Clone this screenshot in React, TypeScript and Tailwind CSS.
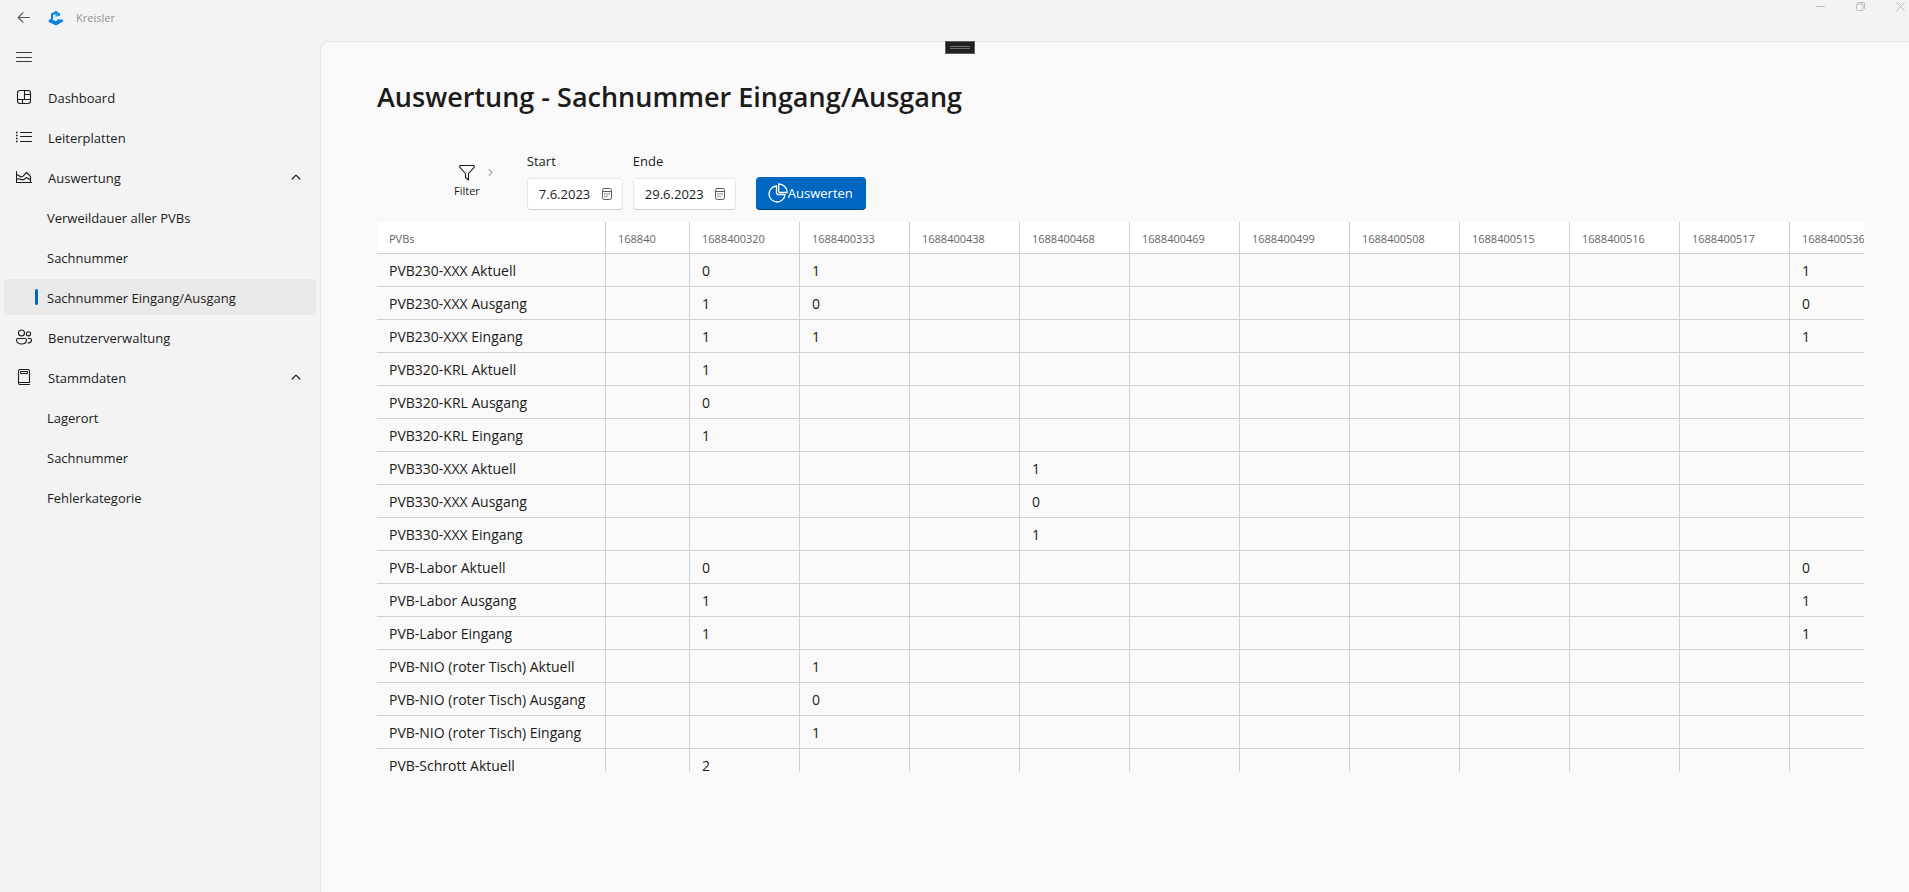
import type { ReactNode } from "react";

type NavEntry = {
  label: string;
  icon?: ReactNode;
  expandable?: boolean;
  active?: boolean;
};

const iconProps = {
  fill: "none",
  stroke: "currentColor",
  strokeWidth: 1,
  strokeLinecap: "round" as const,
  strokeLinejoin: "round" as const,
  "aria-hidden": true,
};

const DashboardIcon = () => (
  <svg width="16" height="16" viewBox="0 0 16 16" {...iconProps} strokeWidth={1.1}>
    <rect x="1.5" y="1.5" width="13" height="13" rx="2.5" />
    <path d="M8.5 1.5v9M1.5 10.5h13M8.5 5.5h6M6.5 10.5v4" />
  </svg>
);

const ListIcon = () => (
  <svg width="16" height="16" viewBox="0 0 16 16" {...iconProps} strokeWidth={1.1}>
    <path d="M4.5 3.5h11M4.5 7.5h11M4.5 12.5h11" />
    <path d="M0 3.5h1.6M0 6.5h1.6M0 9.5h1.6M0 12.5h1.6" strokeLinecap="butt" strokeWidth={1.5} />
  </svg>
);

const AreaChartIcon = () => (
  <svg width="16" height="16" viewBox="0 0 16 16" {...iconProps} strokeWidth={1.1}>
    <path d="M.5 2.5v11h15" />
    <path d="M.5 5.5l2.3 1 2 1.5 2.2-.8 3.600-3.700 3.900 3.900v6" />
    <path d="M.5 10.500l2.500-.8 2.300.9 2.600 0 2.600-2.100 4 2.200" />
  </svg>
);

const PeopleIcon = () => (
  <svg width="16" height="16" viewBox="0 0 16 16" {...iconProps} strokeWidth={1.1}>
    <circle cx="5.5" cy="4" r="3" />
    <circle cx="12.5" cy="4.8" r="2.1" />
    <path d="M2 9.5h7a1.500 1.500 0 0 1 1.500 1.500c0 2.400-2 4-5 4s-5-1.600-5-4A1.500 1.500 0 0 1 2 9.500z" />
    <path d="M12.300 9.500h1.700a1.500 1.500 0 0 1 1.500 1.500c0 1.900-1.400 3-3.600 3" />
  </svg>
);

const BookIcon = () => (
  <svg width="16" height="16" viewBox="0 0 16 16" {...iconProps} strokeWidth={1.1}>
    <path d="M13.500 15.500H4A1.500 1.500 0 0 1 2.500 14V2A1.500 1.500 0 0 1 4 .5h8A1.500 1.500 0 0 1 13.500 2v11.500h-11" />
    <rect x="4.500" y="2.500" width="7" height="2" rx=".4" />
  </svg>
);

const ChevronUpIcon = () => (
  <svg width="10" height="10" viewBox="0 0 10 10" {...iconProps} strokeWidth={1.2}>
    <path d="M1.200 7 5 3.200 8.800 7" />
  </svg>
);

const CalendarIcon = () => (
  <svg width="12" height="12" viewBox="0 0 12 12" {...iconProps}>
    <rect x="1.500" y=".5" width="9" height="11" rx="1.800" />
    <path d="M1.500 3.500h9" />
    <path d="M3.300 6h1M5.500 6h1M7.700 6h1M3.300 8.500h1M5.500 8.500h1" strokeLinecap="butt" strokeWidth={1.300} />
  </svg>
);

const LogoIcon = () => (
  <svg width="16" height="16" viewBox="0 0 16 16" aria-hidden>
    <path d="M.5 10.200 3 8.700 8 11.200 10 9.300 15.300 9.800 15 11.500 8 15.500 .8 12z" fill="#0f80d8" />
    <path d="M3 3.800 5 3V9.500L3 10z" fill="#0f80d8" />
    <path d="M8 .8 12.300 3.800 12 5.800 10 6.300 3 4.500V3.800z" fill="#1689dd" />
    <path d="M5 5 7.800 4.200V6.500L9 7.200V9.500L7.500 10 5 9z" fill="#d3ebfb" />
    <path d="M7.700 4.200 9.800 3.700 10 6.200 7.700 6.800z" fill="#3ba4ea" />
  </svg>
);

const navEntries: NavEntry[] = [
  { label: "Dashboard", icon: <DashboardIcon /> },
  { label: "Leiterplatten", icon: <ListIcon /> },
  { label: "Auswertung", icon: <AreaChartIcon />, expandable: true },
  { label: "Verweildauer aller PVBs" },
  { label: "Sachnummer" },
  { label: "Sachnummer Eingang/Ausgang", active: true },
  { label: "Benutzerverwaltung", icon: <PeopleIcon /> },
  { label: "Stammdaten", icon: <BookIcon />, expandable: true },
  { label: "Lagerort" },
  { label: "Sachnummer" },
  { label: "Fehlerkategorie" },
];

const columns = [
  "168840",
  "1688400320",
  "1688400333",
  "1688400438",
  "1688400468",
  "1688400469",
  "1688400499",
  "1688400508",
  "1688400515",
  "1688400516",
  "1688400517",
  "1688400536",
];

const rows: { name: string; values: Record<string, number> }[] = [
  { name: "PVB230-XXX Aktuell", values: { "1688400320": 0, "1688400333": 1, "1688400536": 1 } },
  { name: "PVB230-XXX Ausgang", values: { "1688400320": 1, "1688400333": 0, "1688400536": 0 } },
  { name: "PVB230-XXX Eingang", values: { "1688400320": 1, "1688400333": 1, "1688400536": 1 } },
  { name: "PVB320-KRL Aktuell", values: { "1688400320": 1 } },
  { name: "PVB320-KRL Ausgang", values: { "1688400320": 0 } },
  { name: "PVB320-KRL Eingang", values: { "1688400320": 1 } },
  { name: "PVB330-XXX Aktuell", values: { "1688400468": 1 } },
  { name: "PVB330-XXX Ausgang", values: { "1688400468": 0 } },
  { name: "PVB330-XXX Eingang", values: { "1688400468": 1 } },
  { name: "PVB-Labor Aktuell", values: { "1688400320": 0, "1688400536": 0 } },
  { name: "PVB-Labor Ausgang", values: { "1688400320": 1, "1688400536": 1 } },
  { name: "PVB-Labor Eingang", values: { "1688400320": 1, "1688400536": 1 } },
  { name: "PVB-NIO (roter Tisch) Aktuell", values: { "1688400333": 1 } },
  { name: "PVB-NIO (roter Tisch) Ausgang", values: { "1688400333": 0 } },
  { name: "PVB-NIO (roter Tisch) Eingang", values: { "1688400333": 1 } },
  { name: "PVB-Schrott Aktuell", values: { "1688400320": 2 } },
];

function TitleBar() {
  return (
    <header className="flex h-[37px] shrink-0 items-start justify-between">
      <div className="flex h-9 items-center pl-4">
        <button type="button" aria-label="Zurück" className="text-[#5a5a5a]">
          <svg width="16" height="16" viewBox="0 0 16 16" {...iconProps} strokeWidth={1.100}>
            <path d="M13.500 7.500H2.200M7 2.700 2.200 7.500 7 12.300" />
          </svg>
        </button>
        <span className="ml-4">
          <LogoIcon />
        </span>
        <span className="ml-3 text-[11px] leading-4 text-[#929292]">Kreisler</span>
      </div>
      <div className="flex gap-[31px] pr-1 pt-[2px] text-[#bcbcbc]">
        <button type="button" aria-label="Minimieren">
          <svg width="9" height="9" viewBox="0 0 9 9" {...iconProps}>
            <path d="M0 4.500h9" />
          </svg>
        </button>
        <button type="button" aria-label="Verkleinern">
          <svg width="9" height="9" viewBox="0 0 9 9" {...iconProps}>
            <rect x=".5" y="2" width="6.500" height="6.500" rx="1" />
            <path d="M2.300.5h4.700a1.500 1.500 0 0 1 1.500 1.500v4.500" />
          </svg>
        </button>
        <button type="button" aria-label="Schließen">
          <svg width="9" height="9" viewBox="0 0 9 9" {...iconProps}>
            <path d="M.5.5l8 8M8.500.5l-8 8" />
          </svg>
        </button>
      </div>
    </header>
  );
}

function Sidebar() {
  return (
    <nav aria-label="Hauptnavigation" className="flex w-80 shrink-0 flex-col gap-1 px-1 pt-[2px]">
      <button type="button" aria-label="Navigation" className="flex h-9 w-10 items-center pl-3 text-[#3a3a3a]">
        <svg width="16" height="16" viewBox="0 0 16 16" {...iconProps}>
          <path d="M.5 3.500h15M.5 8.500h15M.5 12.500h15" />
        </svg>
      </button>
      {navEntries.map((entry, i) => (
        <a
          key={i}
          href="#"
          aria-current={entry.active ? "page" : undefined}
          className={`flex h-9 items-center rounded pr-[15px] text-[13px] leading-5 ${entry.active ? "bg-[#e9e9e9]" : ""} ${entry.icon ? "pl-3" : "pl-[31px]"}`}
        >
          {entry.icon ? (
            <span className="mr-4">{entry.icon}</span>
          ) : (
            <span className={`mr-[9px] h-4 w-[3px] rounded-full ${entry.active ? "bg-[#0067c0]" : ""}`} />
          )}
          <span className="flex-1 pt-[2px]">{entry.label}</span>
          {entry.expandable && <ChevronUpIcon />}
        </a>
      ))}
    </nav>
  );
}

function DateField({ id, label, value, widthClass }: { id: string; label: string; value: string; widthClass: string }) {
  return (
    <div className="flex flex-col gap-[7px]">
      <label htmlFor={id} className="text-[13px] leading-5">
        {label}
      </label>
      <div className={`flex h-8 items-center rounded border border-[#e8e8e8] border-b-[#cfcfcf] bg-white pl-[11px] pr-[9px] ${widthClass}`}>
        <input id={id} defaultValue={value} className="w-0 flex-1 bg-transparent text-[13px] leading-5 outline-none" />
        <button type="button" aria-label={`${label} wählen`} className="text-[#5c5c5c]">
          <CalendarIcon />
        </button>
      </div>
    </div>
  );
}

function Toolbar() {
  return (
    <div className="flex items-end pl-[77px]">
      <button type="button" className="mb-[11px] flex text-[#1b1b1b]">
        <span className="flex flex-col items-center">
          <svg width="16" height="16" viewBox="0 0 16 16" {...iconProps} strokeWidth={1.1}>
            <path d="M.6 1.500c0-.6.400-1 1-1h12.800c.6 0 1 .4 1 1 0 .4-.2.800-.5 1.100L9.500 8.500v6.500L6.500 12.500v-4L1.100 2.600C.8 2.300.6 1.900.6 1.500z" />
          </svg>
          <span className="mt-[2px] text-[11px] leading-4">Filter</span>
        </span>
        <svg className="ml-[6px] mt-1 text-[#7a7a7a]" width="8" height="8" viewBox="0 0 8 8" {...iconProps}>
          <path d="M3 0.500l3 3-3 3" />
        </svg>
      </button>
      <div className="ml-[33px] flex gap-[10px]">
        <DateField id="start" label="Start" value="7.6.2023" widthClass="w-24" />
        <DateField id="ende" label="Ende" value="29.6.2023" widthClass="w-[103px]" />
      </div>
      <button
        type="button"
        className="ml-5 flex h-[33px] w-[110px] items-center rounded border-b border-[#003e73] bg-[#0067c0] pl-3 text-[13px] leading-5 text-white"
      >
        <svg width="20" height="20" viewBox="0 0 20 20" {...iconProps} strokeWidth={1.300}>
          <path d="M8.500 3a8 8 0 1 0 8.500 8.500H10A1.500 1.500 0 0 1 8.500 10z" />
          <path d="M10.700 1a8.500 8.500 0 0 1 8.500 8.500h-7.500a1 1 0 0 1-1-1z" />
        </svg>
        Auswerten
      </button>
    </div>
  );
}

function ResultTable() {
  return (
    <div className="mt-3 min-h-0 flex-1 overflow-hidden">
      <table className="w-[1523px] table-fixed border-separate border-spacing-0 text-left">
        <colgroup>
          <col className="w-[229px]" />
          {columns.map((c, i) => (
            <col key={c} className={i === 0 ? "w-[84px]" : "w-[110px]"} />
          ))}
        </colgroup>
        <thead>
          <tr className="h-8 bg-white text-[11px] leading-4 text-[#646464]">
            <th scope="col" className="border-b border-r border-[#d0d0d0] p-0 pl-3 pt-[2px] font-normal">
              PVBs
            </th>
            {columns.map((c) => (
              <th key={c} scope="col" className="border-b border-r border-[#d0d0d0] p-0 pl-3 pt-[2px] font-normal">
                {c}
              </th>
            ))}
          </tr>
        </thead>
        <tbody>
          {rows.map((row) => (
            <tr key={row.name} className="h-[33px] text-[14px] leading-5">
              <td className="whitespace-nowrap border-b border-r border-[#d0d0d0] p-0 pl-3 pt-[2px]">{row.name}</td>
              {columns.map((c) => (
                <td key={c} className="border-b border-r border-[#d0d0d0] p-0 pl-3 pt-[2px]">
                  {row.values[c]}
                </td>
              ))}
            </tr>
          ))}
        </tbody>
      </table>
    </div>
  );
}

export default function App() {
  return (
    <div className="flex h-screen flex-col overflow-hidden bg-[#f3f3f3] font-['Open_Sans','Noto_Sans',sans-serif] text-[#1b1b1b]">
      <TitleBar />
      <div className="flex min-h-0 flex-1">
        <Sidebar />
        <main className="relative mt-1 flex min-w-0 flex-1 flex-col rounded-tl-lg border-l border-t border-[#e5e5e5] bg-[#f9f9f9] pb-[120px] pl-14 pr-[45px] pt-[35px]">
          <div className="absolute left-[624px] -top-px flex h-[13px] w-[30px] flex-col items-center justify-center gap-px border border-[#606060] bg-[#202020]">
            <span className="h-px w-5 bg-[#707070]" />
            <span className="h-px w-5 bg-[#707070]" />
          </div>
          <h1 className="text-[27px] font-semibold leading-10">Auswertung - Sachnummer Eingang/Ausgang</h1>
          <div className="mt-[34px]">
            <Toolbar />
          </div>
          <ResultTable />
        </main>
      </div>
    </div>
  );
}
